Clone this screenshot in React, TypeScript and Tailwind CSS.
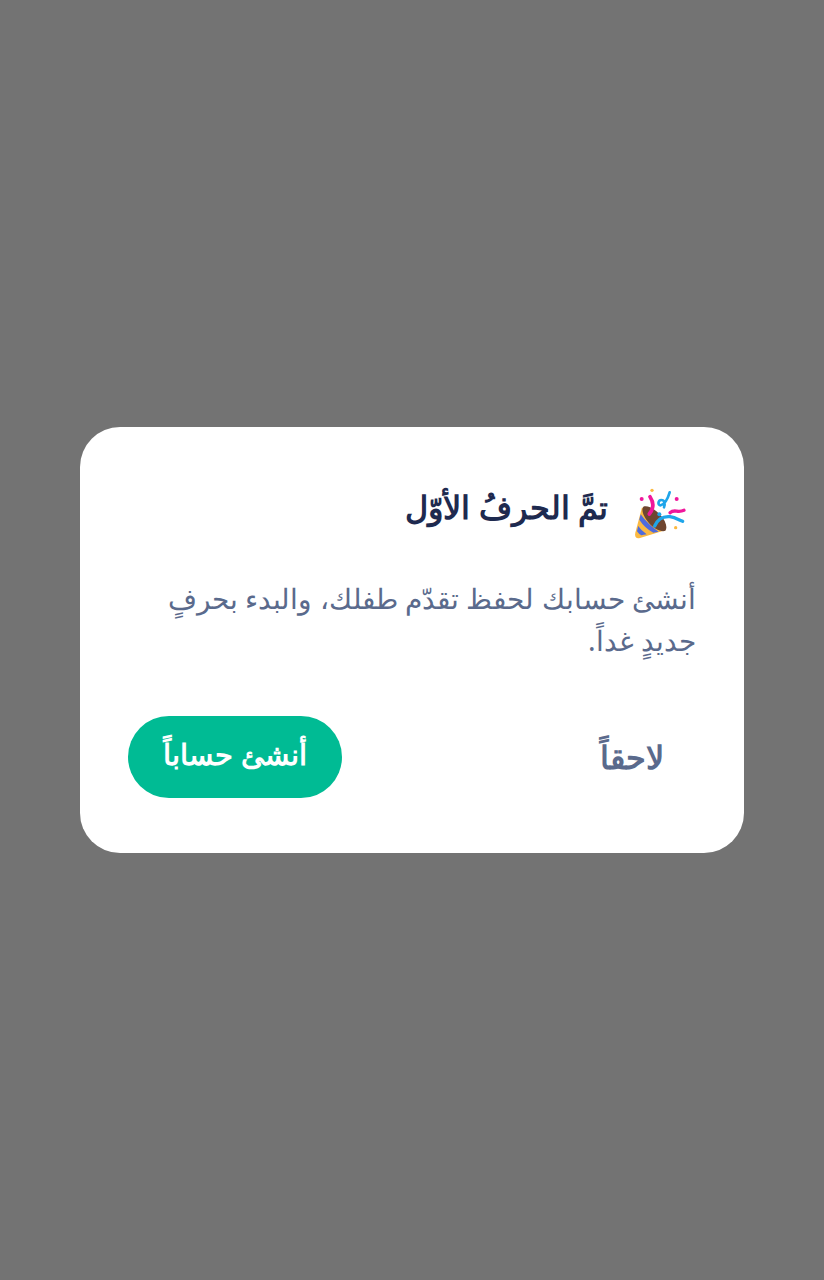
import React from "react";

// party popper, drawn on a 3x grid of its 76x66 box
function Popper() {
  return (
    <svg viewBox="0 0 228 198" className="w-[76px] h-[66px] shrink-0" aria-hidden="true">
      <path d="M66 82 L138 150 L60 174 Q42 178 46 158 Z" fill="#fbb941" />
      <path d="M51 154 Q56 162 64 166 L80 163 Q64 152 54.5 138 Z" fill="#4f6bdc" />
      <path d="M58 119 Q74 144 100 158 L116 155 Q84 134 62 103 Z" fill="#4f6bdc" />
      <path d="M70 80 C84 74 108 90 122 106 C136 122 144 142 136 152 C124 158 100 144 86 128 C72 112 62 90 70 80 Z" fill="#6f4630" />
      <path d="M90 50 C98 62 106 80 88 102" stroke="#f0179b" strokeWidth="11" strokeLinecap="round" fill="none" />
      <path d="M149 37 C144 54 136 72 122 76 C112 76 114 60 124 60 C134 60 136 72 132 82" stroke="#1ea5ea" strokeWidth="8" strokeLinecap="round" fill="none" />
      <path d="M150 98 C164 86 172 100 192 91" stroke="#f0179b" strokeWidth="10" strokeLinecap="round" fill="none" />
      <path d="M104 138 C112 120 128 108 150 110 C164 112 174 118 188 124" stroke="#1ea5ea" strokeWidth="10" strokeLinecap="round" fill="none" />
      <circle cx="96" cy="31" r="5" fill="#fbb941" />
      <circle cx="65" cy="57" r="6" fill="#f0179b" />
      <circle cx="170" cy="57" r="6" fill="#f0179b" />
      <circle cx="118" cy="103" r="6" fill="#1ea5ea" />
      <circle cx="167" cy="143" r="5" fill="#fbb941" />
    </svg>
  );
}

export default function App() {
  return (
    <div dir="rtl" className="min-h-[1280px] bg-[#737373] flex items-center justify-center px-20 font-['Noto_Sans','Inter',sans-serif]">
      <div className="w-full bg-white rounded-[40px] px-12 pt-12 pb-[55px]">
        <div className="flex items-center gap-3 h-[76px] mb-[26px]">
          <Popper />
          <h2 className="text-[32.3px] leading-none font-bold text-[#1e2a4f] mb-3.5">تمَّ الحرفُ الأوّل</h2>
        </div>
        <p className="text-[28.3px] leading-[42px] text-[#5a6a8c] mb-[55px]">
          أنشئ حسابك لحفظ تقدّم طفلك، والبدء بحرفٍ جديدٍ غداً.
        </p>
        <div className="flex items-center justify-between">
          <button className="px-8 h-[82px] text-[32px] font-bold text-[#5a6a8c]">لاحقاً</button>
          <button className="w-[214px] h-[82px] rounded-full bg-[#00bb94] text-white text-[28.5px] font-bold pb-1.5">أنشئ حساباً</button>
        </div>
      </div>
    </div>
  );
}
